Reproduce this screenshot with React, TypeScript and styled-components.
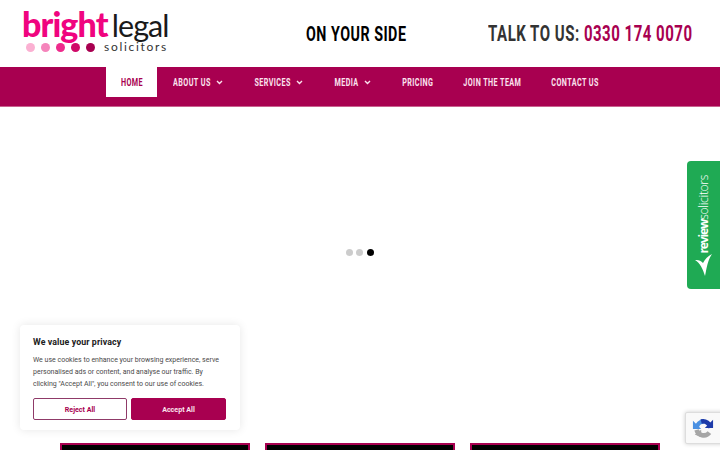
import React from 'react'
import styled, { createGlobalStyle } from 'styled-components'

const MAROON = '#a80050'

const GlobalStyle = createGlobalStyle`
  html, body { margin: 0; padding: 0; height: 450px; overflow: hidden; background: #fff; }
  * { box-sizing: border-box; }
  body { font-family: Roboto, "Liberation Sans", sans-serif; }
`

const Page = styled.div`
  position: relative;
  width: 720px;
  height: 450px;
  overflow: hidden;
`

const Header = styled.header`
  height: 67px;
  display: flex;
  align-items: center;
  padding: 0 27.5px 0 22px;
`

const Logo = styled.div`
  width: 150px;
  height: 44px;
  margin-top: -2px;
  flex: none;
  display: flex;
  flex-direction: column;
  font-family: Lato, sans-serif;
`

const LogoWords = styled.div`
  display: flex;
  align-items: baseline;
  gap: 4px;
  height: 30px;
  line-height: 26px;
  letter-spacing: -0.9px;
`

const Bright = styled.span`
  color: #f0047f;
  font-size: 34px;
  font-weight: 900;
`

const Legal = styled.span`
  color: #1a1a1a;
  font-size: 30.5px;
  font-weight: 400;
`

const LogoBottom = styled.div`
  display: flex;
  align-items: center;
  padding-left: 4px;
  height: 14px;
`

const LogoDots = styled.div`
  display: flex;
  gap: 6px;
  width: 78px;
`

const LogoDot = styled.span<{ $color: string }>`
  width: 9px;
  height: 9px;
  border-radius: 50%;
  background: ${p => p.$color};
`

const LogoSub = styled.span`
  margin-top: -2px;
  font-size: 12px;
  letter-spacing: 1.7px;
  color: #333;
`

// no condensed face is installed: narrow type is set small, then stretched upward
const Condensed = styled.span`
  display: inline-block;
  font-family: Roboto, sans-serif;
  font-weight: 700;
  white-space: nowrap;
  transform: scaleY(1.45);
`

const Strap = styled(Condensed)`
  margin-left: 134px;
  font-size: 14.3px;
  letter-spacing: 0.5px;
  color: #000;
`

const Phone = styled(Condensed)`
  margin-left: auto;
  font-size: 15px;
  letter-spacing: 0.5px;
  color: #333;
`

const PhoneNumber = styled.span`
  color: ${MAROON};
`

const Nav = styled.nav`
  height: 40px;
  padding: 0 0 10px 106px;
  display: flex;
  background: ${MAROON};
  border-bottom: 1px solid #c9628f;
`

const NavItem = styled.div<{ $active?: boolean; $menu?: boolean }>`
  height: 30px;
  padding: 0 ${p => (p.$menu ? '16.7px' : p.$active ? '14px' : '15px')} 0 15px;
  margin-right: ${p => (p.$active ? '1px' : '0')};
  display: flex;
  align-items: center;
  gap: 5px;
  color: ${p => (p.$active ? MAROON : '#fbe3ee')};
  background: ${p => (p.$active ? '#fff' : 'transparent')};
`

const NavLabel = styled(Condensed)`
  font-size: 7.2px;
  letter-spacing: 0.42px;
`

const Hero = styled.section`
  height: 336px;
  padding: 142px 1px 0 0;
  display: flex;
  justify-content: center;
  gap: 3.5px;
`

const SlideDot = styled.span<{ $active?: boolean }>`
  width: 7px;
  height: 7px;
  border-radius: 50%;
  background: ${p => (p.$active ? '#000' : '#ccc')};
`

const Cards = styled.section`
  display: flex;
  justify-content: center;
  gap: 15px;
`

const Card = styled.div`
  width: 190px;
  height: 60px;
  background: #000;
  border: 2px solid ${MAROON};
`

const ReviewTab = styled.aside`
  position: absolute;
  top: 161px;
  right: 0;
  width: 33px;
  height: 128px;
  background: #1faa54;
  border-radius: 4px 0 0 4px;
  display: flex;
  flex-direction: column;
  align-items: center;
  justify-content: flex-end;
  padding-bottom: 13px;
  color: #fff;
`

const ReviewText = styled.span`
  writing-mode: vertical-rl;
  transform: rotate(180deg);
  font-family: "Open Sans", sans-serif;
  font-size: 12px;
  letter-spacing: -0.3px;
  line-height: 16px;
  font-weight: 300;
`

const ReviewBold = styled.b`
  font-weight: 700;
  letter-spacing: -1.1px;
`

const ReviewIcon = styled.svg`
  flex: none;
`

const CookieBox = styled.div`
  position: absolute;
  left: 20px;
  top: 325px;
  width: 220px;
  height: 105px;
  padding: 10px 13px 0;
  background: #fff;
  border-radius: 4px;
  box-shadow: 0 0 10px rgba(0, 0, 0, 0.1);
`

const CookieTitle = styled.div`
  font-size: 8.8px;
  line-height: 14px;
  font-weight: 700;
  letter-spacing: 0.1px;
  color: #212121;
`

const CookieText = styled.p`
  margin: 5px 0 8px;
  font-size: 7px;
  line-height: 12px;
  color: #4a4a4a;
  white-space: nowrap;
`

const CookieButtons = styled.div`
  display: flex;
  gap: 4px;
`

const CookieButton = styled.button<{ $solid?: boolean }>`
  width: ${p => (p.$solid ? '95px' : '94px')};
  height: 22px;
  padding: 0;
  border-radius: 2px;
  border: 1.5px solid ${p => (p.$solid ? MAROON : '#8f3a68')};
  background: ${p => (p.$solid ? MAROON : '#fff')};
  color: ${p => (p.$solid ? '#fbe3ee' : MAROON)};
  font-family: Roboto, sans-serif;
  font-size: 7.1px;
  font-weight: 700;
`

const Recaptcha = styled.div`
  position: absolute;
  left: 685px;
  top: 412px;
  width: 40px;
  height: 32px;
  padding: 4px 0 0 6px;
  background: #f9f9f9;
  border: 1px solid #ddd;
  border-radius: 2px 0 0 2px;
  box-shadow: 0 0 4px rgba(0, 0, 0, 0.2);
`

const Chevron = () => (
  <svg width="7" height="5" viewBox="0 0 7 5" fill="none" stroke="#fbe3ee" strokeWidth="1.4">
    <path d="M1 1l2.5 2.5L6 1" />
  </svg>
)

const ReviewMark = () => (
  <ReviewIcon width="17" height="22" viewBox="0 0 17 22" fill="#fff">
    <path d="M0 6c3-.5 6 .5 8 3 2-4 5-7 9-9-3 4-5 11-6 17l-1 5C8 15 5 9 0 6z" />
  </ReviewIcon>
)

const RecaptchaIcon = () => (
  <svg width="22" height="22" viewBox="0 0 24 24" fill="none" strokeWidth="5">
    <path d="M5 14a8 8 0 0 0 14 3" stroke="#a6a6a6" />
    <path d="M5 12a8 8 0 0 1 8-7" stroke="#4a90e2" />
    <path d="M10 5a8 8 0 0 1 10 7" stroke="#1c3aa9" />
    <path d="M14 12h9V3z" fill="#1c3aa9" stroke="none" />
    <path d="M1 4v9h9z" fill="#4a90e2" stroke="none" />
    <path d="M3 19l7 3v-8z" fill="#a6a6a6" stroke="none" />
  </svg>
)

const logoDots = ['#fbb0d2', '#f584bb', '#ee2b8c', '#cf0a68', '#a80050']

const navItems = [
  { label: 'HOME', active: true },
  { label: 'ABOUT US', menu: true },
  { label: 'SERVICES', menu: true },
  { label: 'MEDIA', menu: true },
  { label: 'PRICING' },
  { label: 'JOIN THE TEAM' },
  { label: 'CONTACT US' },
]

export default function App() {
  return (
    <Page>
      <GlobalStyle />
      <Header>
        <Logo>
          <LogoWords>
            <Bright>bright</Bright>
            <Legal>legal</Legal>
          </LogoWords>
          <LogoBottom>
            <LogoDots>
              {logoDots.map(color => (
                <LogoDot key={color} $color={color} />
              ))}
            </LogoDots>
            <LogoSub>solicitors</LogoSub>
          </LogoBottom>
        </Logo>
        <Strap>ON YOUR SIDE</Strap>
        <Phone>
          TALK TO US: <PhoneNumber>0330 174 0070</PhoneNumber>
        </Phone>
      </Header>

      <Nav>
        {navItems.map(item => (
          <NavItem key={item.label} $active={item.active} $menu={item.menu}>
            <NavLabel>{item.label}</NavLabel>
            {item.menu && <Chevron />}
          </NavItem>
        ))}
      </Nav>

      <Hero>
        <SlideDot />
        <SlideDot />
        <SlideDot $active />
      </Hero>

      <Cards>
        <Card />
        <Card />
        <Card />
      </Cards>

      <ReviewTab>
        <ReviewText>
          <ReviewBold>review</ReviewBold>solicitors
        </ReviewText>
        <ReviewMark />
      </ReviewTab>

      <CookieBox>
        <CookieTitle>We value your privacy</CookieTitle>
        <CookieText>
          We use cookies to enhance your browsing experience, serve
          <br />
          personalised ads or content, and analyse our traffic. By
          <br />
          clicking "Accept All", you consent to our use of cookies.
        </CookieText>
        <CookieButtons>
          <CookieButton>Reject All</CookieButton>
          <CookieButton $solid>Accept All</CookieButton>
        </CookieButtons>
      </CookieBox>

      <Recaptcha>
        <RecaptchaIcon />
      </Recaptcha>
    </Page>
  )
}
